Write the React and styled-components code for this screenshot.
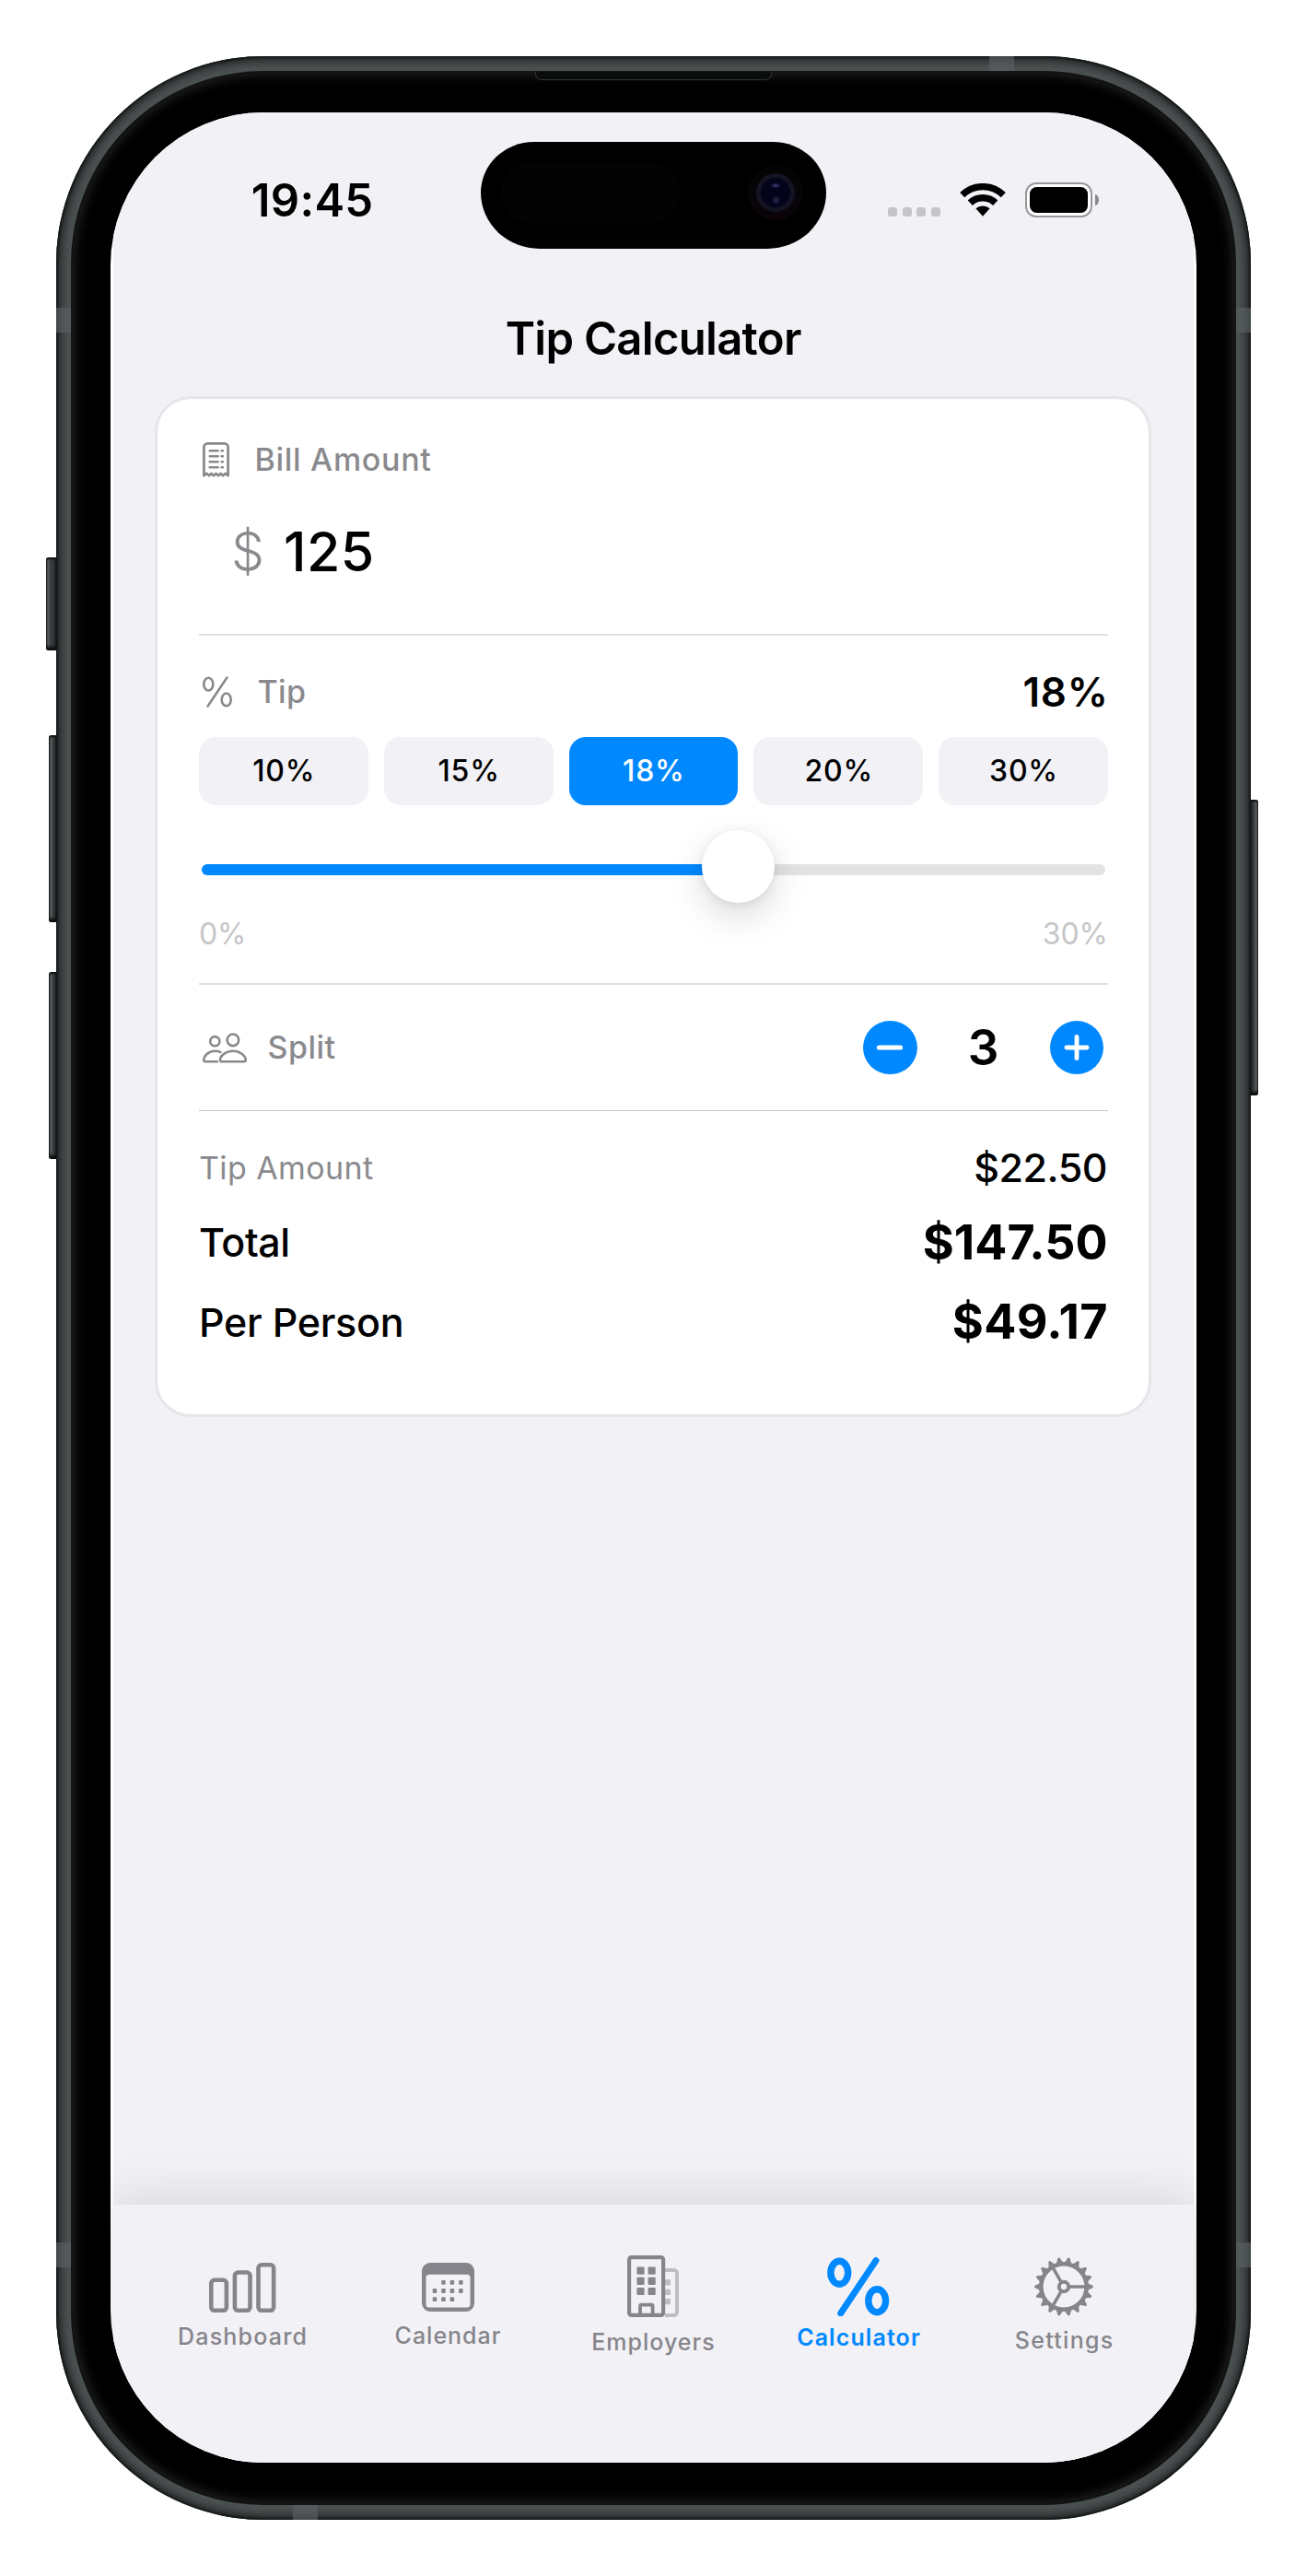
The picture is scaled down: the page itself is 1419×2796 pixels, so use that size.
import React, { useState } from "react";
import styled, { createGlobalStyle, css } from "styled-components";

const BLUE = "#0088ff";
const GRAY = "#8a8a8e";
const TAB_GRAY = "#86858b";
const SURFACE = "#f2f1f6";

const GlobalStyle = createGlobalStyle`
  * { box-sizing: border-box; }
  body {
    margin: 0;
    background: #fff;
    font-family: Inter, "Liberation Sans", sans-serif;
    -webkit-font-smoothing: antialiased;
  }
  button { font-family: inherit; border: 0; padding: 0; cursor: pointer; }
  svg { display: block; flex: none; }
`;

/* ---------- device ---------- */

const Stage = styled.main`
  width: 1419px;
  height: 2796px;
  padding-top: 61px;
  display: flex;
  justify-content: center;
  align-items: flex-start;
  overflow: hidden;
`;

const Device = styled.div`
  position: relative;
  width: 1297px;
  height: 2674px;
  padding: 16px;
  border-radius: 225px;
  background: #4d5253;
  box-shadow: inset 0 0 3px 1px #0a0d0d, inset 0 0 12px 4px #171a1a;
`;

const Bezel = styled.div`
  width: 100%;
  height: 100%;
  padding: 41px;
  border: 2px solid #131515;
  border-radius: 209px;
  background: #000;
  box-shadow: inset 0 0 14px 0 #303030;
`;

const Screen = styled.div`
  width: 1179px;
  height: 2551px;
  margin-top: 2px;
  padding: 0 3px;
  border-radius: 166px;
  background: #fff;
  overflow: hidden;
`;

const Content = styled.div`
  height: 100%;
  display: flex;
  flex-direction: column;
  background: ${SURFACE};
`;

const SideButton = styled.i`
  position: absolute;
  top: ${(p) => p.$top}px;
  ${(p) => (p.$right ? "left: 1297px" : `right: 1297px`)};
  width: ${(p) => p.$width}px;
  height: ${(p) => p.$height}px;
  border-radius: ${(p) => (p.$right ? "0 3px 3px 0" : "3px 0 0 3px")};
  background: linear-gradient(
    ${(p) => (p.$right ? "270deg" : "90deg")},
    #0d1010 0, #5f6566 2px, #3c4142 4px, #343839 70%, #1b1e1e 100%
  );
  box-shadow: inset 0 3px 2px -1px #0d1010, inset 0 -5px 3px -1px #0d1010;
`;

const Antenna = styled.i`
  position: absolute;
  background: rgba(92, 98, 98, 0.6);
  ${(p) =>
    p.$side === "left" || p.$side === "right"
      ? css`
          ${p.$side}: 0;
          top: ${p.$at}px;
          width: 16px;
          height: 27px;
        `
      : css`
          ${p.$side}: 0;
          left: ${p.$at}px;
          width: 27px;
          height: 16px;
        `}
`;

const Earpiece = styled.i`
  position: absolute;
  left: 520px;
  top: 17px;
  width: 257px;
  height: 9px;
  border: 1px solid #303232;
  border-top: 0;
  border-radius: 0 0 7px 7px;
  background: #0b0c0c;
`;

/* ---------- status bar ---------- */

const StatusBar = styled.header`
  display: flex;
  height: 182px;
  padding-top: 32px;
`;

const Clock = styled.div`
  width: 399px;
  height: 126px;
  padding-left: 33px;
  display: flex;
  align-items: center;
  justify-content: center;
`;

const Island = styled.div`
  width: 375px;
  height: 116px;
  padding: 0 25px 6px 22px;
  display: flex;
  align-items: center;
  justify-content: space-between;
  border-radius: 58px 58px 64px 64px / 55px 55px 61px 61px;
  background: #000;
`;

const Sensor = styled.i`
  width: 194px;
  height: 66px;
  border-radius: 33px;
  background: #030303;
`;

const Lens = styled.i`
  width: 60px;
  height: 60px;
  display: grid;
  place-items: center;
  border-radius: 50%;
  background: linear-gradient(#040404, #0a040a);

  &::after {
    content: "";
    width: 32px;
    height: 32px;
    border: 5px solid #131323;
    border-radius: 50%;
    background:
      radial-gradient(ellipse 6px 3px at 50% 26%, #3e3e82, transparent),
      radial-gradient(circle 5px at 52% 76%, #0c3c40, #160630 80%, transparent),
      #03031a;
  }
`;

const StatusIcons = styled.div`
  width: 399px;
  height: 126px;
  padding-left: 67px;
  display: flex;
  align-items: center;
`;

const Signal = styled.div`
  display: flex;
  gap: 5.6px;
  margin: 26px 21px 0 0;

  i {
    width: 10px;
    height: 10px;
    border-radius: 3px;
    background: #c5c4c9;
  }
`;

const Battery = styled.div`
  display: flex;
  align-items: center;
  gap: 3px;
  margin-left: 21px;
`;

const BatteryShell = styled.div`
  width: 73px;
  height: 38px;
  padding: 3px;
  border: 2.5px solid #98989b;
  border-radius: 12px;
  background: #fff;

  &::before {
    content: "";
    display: block;
    height: 100%;
    border-radius: 7.5px;
    background: #000;
  }
`;

const BatteryCap = styled.i`
  width: 4px;
  height: 12px;
  border-radius: 0 4px 4px 0 / 0 6px 6px 0;
  background: #88888b;
`;

/* ---------- text ---------- */

const Text = styled.span`
  font-size: ${(p) => p.$size}px;
  font-weight: ${(p) => p.$weight || 500};
  line-height: 1;
  letter-spacing: ${(p) => p.$track || 0}px;
  margin-right: ${(p) => -(p.$track || 0)}px;
  color: ${(p) => p.$color || "#000"};
  white-space: nowrap;
`;

/* ---------- calculator card ---------- */

const TitleBar = styled.div`
  height: 126px;
  display: flex;
  align-items: center;
  justify-content: center;
`;

const Card = styled.section`
  height: 1108px;
  margin: 0 46px 0 45px;
  padding: 45px 44px 0 45px;
  display: flex;
  flex-direction: column;
  border: 3px solid #e5e5ea;
  border-radius: 39px;
  background: #fff;
`;

const Divider = styled.hr`
  flex: none;
  height: ${(p) => (p.$thin ? 1 : 2)}px;
  margin: 0;
  border: 0;
  background: ${(p) => (p.$thin ? "#c6c6c8" : "#e0e0e1")};
`;

const Row = styled.div`
  flex: none;
  height: ${(p) => p.$height}px;
  padding-top: ${(p) => p.$top || 0}px;
  padding-bottom: ${(p) => p.$bottom || 0}px;
  display: flex;
  align-items: center;
  justify-content: space-between;
`;

const Caption = styled.div`
  display: flex;
  align-items: center;
  gap: ${(p) => p.$gap}px;
  padding-left: 3.5px;
`;

const Amount = styled.div`
  height: 168px;
  padding: 0 0 11px 35px;
  display: flex;
  align-items: center;
  gap: 21px;
`;

const Presets = styled.div`
  display: grid;
  grid-template-columns: repeat(5, 1fr);
  gap: 17px;
`;

const Preset = styled.button`
  height: 74px;
  border-radius: 18px;
  background: ${(p) => (p.$active ? BLUE : SURFACE)};
`;

const Slider = styled.div`
  position: relative;
  height: 80px;
  margin: 27px 3px 0;
  padding-top: 37px;
`;

const Track = styled.div`
  height: 12px;
  border-radius: 6px;
  background: #e3e3e5;
  overflow: hidden;
`;

const Fill = styled.div`
  height: 100%;
  background: ${BLUE};
`;

const Thumb = styled.div`
  position: absolute;
  top: 0;
  width: 79px;
  height: 79px;
  margin-left: 2px;
  border-radius: 50%;
  background: #fff;
  box-shadow: 0 14px 38px rgba(0, 0, 0, 0.15), 0 2px 10px rgba(0, 0, 0, 0.08);
`;

const Stepper = styled.div`
  display: flex;
  align-items: center;
  padding-right: 5px;
`;

const Count = styled.div`
  width: 144px;
  display: flex;
  justify-content: center;
`;

const RoundButton = styled.button`
  width: 58.5px;
  height: 58.5px;
  display: grid;
  place-items: center;
  border-radius: 50%;
  background: ${BLUE};
`;

const Summary = styled.div`
  padding: 23px 0.5px 0 0;
  display: flex;
  flex-direction: column;
`;

/* ---------- tab bar ---------- */

const TabBar = styled.nav`
  height: 280px;
  margin-top: auto;
  padding: 0 29.5px 0 28.5px;
  display: flex;
  background: ${SURFACE};
  box-shadow: 0 -3px 56px rgba(0, 0, 0, 0.13);
`;

const Tab = styled.div`
  flex: 1;
  padding-top: ${(p) => p.$top}px;
  display: flex;
  flex-direction: column;
  align-items: center;
  gap: ${(p) => p.$gap}px;
  color: ${(p) => (p.$active ? BLUE : TAB_GRAY)};
`;

/* ---------- icons ---------- */

const WifiIcon = () => (
  <svg width="50" height="36" viewBox="0 0 50 36">
    <g fill="none" stroke="#000" strokeWidth="7.2">
      <path d="M2.7 12.6A32 32 0 0 1 47.3 12.6" />
      <path d="M11.3 21.2A20 20 0 0 1 38.7 21.2" strokeWidth="7.6" />
    </g>
    <path d="M25 35.8L17.4 27.2A12 12 0 0 1 32.6 27.2z" fill="#000" />
  </svg>
);

const ReceiptIcon = () => (
  <svg width="29" height="38" viewBox="0 0 29 38" fill="none" stroke={GRAY}>
    <path
      d="M1.4 36.2V5.4a4 4 0 0 1 4-4h18.2a4 4 0 0 1 4 4v30.8l-3-2.2-2.6 2.2-2.5-2.2-2.5 2.2-2.5-2.2-2.5 2.2-2.5-2.2-2.5 2.2-2.5-2.2z"
      strokeWidth="2.8"
      strokeLinejoin="round"
    />
    <g strokeWidth="2.5" strokeLinecap="round">
      <path d="M7.7 9.3h9M7.7 15.3h9M7.7 21.3h9M7.7 27.3h9" />
      <path d="M20.6 9.3h1.3M20.6 15.3h1.3M20.6 21.3h1.3M20.6 27.3h1.3" />
    </g>
  </svg>
);

const PercentIcon = () => (
  <svg width="32" height="34" viewBox="0 0 32 34" fill="none" stroke={GRAY} strokeWidth="2.6">
    <ellipse cx="6.3" cy="8.6" rx="5" ry="6.9" />
    <ellipse cx="25.7" cy="25.4" rx="5" ry="6.9" />
    <path d="M26.4 1.6L5.6 32.4" strokeLinecap="round" />
  </svg>
);

const PeopleIcon = () => (
  <svg width="48" height="33" viewBox="0 0 48 33" fill="none" stroke={GRAY} strokeWidth="2.6" strokeLinecap="round">
    <circle cx="32.9" cy="7.8" r="6.3" />
    <circle cx="13.3" cy="9.2" r="5.1" />
    <path d="M20.9 31.3H45c1.2 0 1.8-.7 1.8-1.8 0-4.2-5.9-9.8-13.9-9.8S19 25.3 19 29.5c0 1.1.7 1.8 1.9 1.8z" />
    <path d="M15.8 31.3H3c-1.2 0-1.8-.7-1.8-1.8 0-4.3 5-9.8 12.1-9.8 2.3 0 4.3.5 6 1.2" />
  </svg>
);

const StepIcon = ({ plus }) => (
  <svg width="30" height="30" viewBox="0 0 30 30" stroke="#fff" strokeWidth={plus ? 4.8 : 5.2} strokeLinecap="round">
    {plus ? <path d="M15 3.3V26.7M3.9 15H26.1" /> : <path d="M3.5 15H26.5" />}
  </svg>
);

const BarsIcon = () => (
  <svg width="73" height="54" viewBox="0 0 73 54" fill="none" stroke="currentColor" strokeWidth="4.6">
    <rect x="2.3" y="18.8" width="16.6" height="33" rx="3.5" />
    <rect x="27.9" y="10.5" width="16.6" height="41.3" rx="3.5" />
    <rect x="53.5" y="2.3" width="16.6" height="49.5" rx="3.5" />
  </svg>
);

const CalendarIcon = () => (
  <svg width="57" height="53" viewBox="0 0 57 53">
    <path
      fillRule="evenodd"
      fill="currentColor"
      d="M9 0h39a9 9 0 0 1 9 9v35a9 9 0 0 1-9 9H9a9 9 0 0 1-9-9V9a9 9 0 0 1 9-9zM8 12.8a3.5 3.5 0 0 0-3.5 3.5V45A3.5 3.5 0 0 0 8 48.5h41a3.5 3.5 0 0 0 3.5-3.5V16.3a3.5 3.5 0 0 0-3.5-3.5z"
    />
    <g fill="currentColor">
      {[[1, 0], [2, 0], [3, 0], [0, 1], [1, 1], [2, 1], [3, 1], [0, 2], [1, 2], [2, 2]].map(([c, r]) => (
        <rect key={`${c}${r}`} x={11.7 + c * 9.45} y={18.9 + r * 9.2} width="4.6" height="4.8" rx="1.2" />
      ))}
    </g>
  </svg>
);

const BuildingIcon = () => (
  <svg width="56" height="67" viewBox="0 0 56 67">
    <g fill="#bebdc2">
      <path d="M41 14h9.5a5.5 5.5 0 0 1 5.5 5.5v42a5.5 5.5 0 0 1-5.5 5.5H41v-4h9.5a1.5 1.5 0 0 0 1.5-1.5v-42a1.5 1.5 0 0 0-1.5-1.5H41z" />
      <rect x="40" y="26.2" width="7" height="6.2" rx="1" />
      <rect x="40" y="36.8" width="7" height="6.2" rx="1" />
      <rect x="40" y="47" width="7" height="6.2" rx="1" />
    </g>
    <rect x="2.1" y="2.1" width="37" height="62.8" rx="2.5" fill={SURFACE} stroke="currentColor" strokeWidth="4.2" />
    <path d="M14 64V55.2a1.5 1.5 0 0 1 1.5-1.5h10.6a1.5 1.5 0 0 1 1.5 1.5V64" fill="none" stroke="currentColor" strokeWidth="3.8" />
    <g fill="currentColor">
      {[0, 1, 2].map((r) =>
        [10.4, 22.5].map((x) => (
          <rect key={`${r}${x}`} x={x} y={12.5 + r * 11.2} width="8.2" height="8.2" rx="1" />
        ))
      )}
    </g>
  </svg>
);

const BigPercentIcon = () => (
  <svg width="68" height="64" viewBox="0 0 68 64" fill="none" stroke="currentColor">
    <ellipse cx="13.3" cy="16.8" rx="9.4" ry="12.5" strokeWidth="7.4" />
    <ellipse cx="54.2" cy="47.2" rx="9.4" ry="12.5" strokeWidth="7.4" />
    <path d="M53 3.6L14.8 60.8" strokeWidth="7" strokeLinecap="round" />
  </svg>
);

const GearIcon = () => (
  <svg width="64" height="64" viewBox="-32 -32 64 64" fill="none" stroke="currentColor">
    <circle r="24.7" strokeWidth="4.6" />
    <circle r="5.2" strokeWidth="4" />
    <path d="M6.5 0H24M-3.25 -5.6L-12 -20.8M-3.25 5.6L-12 20.8" strokeWidth="3.5" />
    <g fill="currentColor" stroke="none">
      {Array.from({ length: 18 }, (_, i) => (
        <path key={i} d="M25.5 -4L30.2 -1.7Q31.9 -1.5 31.9 0T30.2 1.7L25.5 4z" transform={`rotate(${i * 20})`} />
      ))}
    </g>
  </svg>
);

/* ---------- app ---------- */

const PRESETS = [10, 15, 18, 20, 30];
const MAX_TIP = 30;

const TABS = [
  { label: "Dashboard", icon: <BarsIcon />, top: 63, gap: 14, track: 1.2 },
  { label: "Calendar", icon: <CalendarIcon />, top: 63, gap: 13.5, track: 1 },
  { label: "Employers", icon: <BuildingIcon />, top: 55, gap: 14.5, track: 1 },
  { label: "Calculator", icon: <BigPercentIcon />, top: 57, gap: 11, track: 1.1, active: true },
  { label: "Settings", icon: <GearIcon />, top: 57, gap: 14, track: 1.3 },
];

const money = (n) => `$${n.toFixed(2)}`;

export default function App() {
  const [tip, setTip] = useState(18);
  const [people, setPeople] = useState(3);
  const bill = 125;
  const tipAmount = (bill * tip) / 100;
  const total = bill + tipAmount;
  const ratio = tip / MAX_TIP;

  return (
    <>
      <GlobalStyle />
      <Stage>
        <Device>
          <SideButton $top={544} $width={11} $height={101} />
          <SideButton $top={737} $width={8} $height={203} />
          <SideButton $top={994} $width={8} $height={203} />
          <SideButton $right $top={807} $width={8} $height={321} />
          <Bezel>
            <Screen>
              <Content>
                <StatusBar>
                  <Clock>
                    <Text $size={49} $weight={600} $track={0.3}>19:45</Text>
                  </Clock>
                  <Island>
                    <Sensor />
                    <Lens />
                  </Island>
                  <StatusIcons>
                    <Signal><i /><i /><i /><i /></Signal>
                    <WifiIcon />
                    <Battery>
                      <BatteryShell />
                      <BatteryCap />
                    </Battery>
                  </StatusIcons>
                </StatusBar>

                <TitleBar>
                  <Text $size={49} $weight={600} $track={-0.7}>Tip Calculator</Text>
                </TitleBar>

                <Card>
                  <Row $height={42}>
                    <Caption $gap={28}>
                      <ReceiptIcon />
                      <Text $size={34} $track={0.7} $color={GRAY}>Bill Amount</Text>
                    </Caption>
                  </Row>
                  <Amount>
                    <Text $size={57} $weight={300} $color={GRAY}>$</Text>
                    <Text $size={59} $weight={550} $track={0.4}>{bill}</Text>
                  </Amount>
                  <Divider />

                  <Row $height={110} $top={12}>
                    <Caption $gap={28}>
                      <PercentIcon />
                      <Text $size={34} $track={0.35} $color={GRAY}>Tip</Text>
                    </Caption>
                    <Text $size={44} $weight={600} $track={0.8}>{tip}%</Text>
                  </Row>
                  <Presets>
                    {PRESETS.map((p) => (
                      <Preset key={p} $active={p === tip} onClick={() => setTip(p)}>
                        <Text $size={32} $track={0.8} $color={p === tip ? "#fff" : "#000"}>{p}%</Text>
                      </Preset>
                    ))}
                  </Presets>
                  <Slider>
                    <Track>
                      <Fill style={{ width: `${ratio * 100}%` }} />
                    </Track>
                    <Thumb style={{ left: `calc(${ratio} * (100% - 79px))` }} />
                  </Slider>
                  <Row $height={86} $bottom={21}>
                    <Text $size={32} $weight={400} $track={-0.3} $color="#c5c5c7">0%</Text>
                    <Text $size={32} $weight={400} $color="#c5c5c7">30%</Text>
                  </Row>
                  <Divider />

                  <Row $height={136}>
                    <Caption $gap={23}>
                      <PeopleIcon />
                      <Text $size={34} $track={0.5} $color={GRAY}>Split</Text>
                    </Caption>
                    <Stepper>
                      <RoundButton aria-label="Fewer people" onClick={() => setPeople(Math.max(1, people - 1))}>
                        <StepIcon />
                      </RoundButton>
                      <Count>
                        <Text $size={53} $weight={600}>{people}</Text>
                      </Count>
                      <RoundButton aria-label="More people" onClick={() => setPeople(people + 1)}>
                        <StepIcon plus />
                      </RoundButton>
                    </Stepper>
                  </Row>
                  <Divider $thin />

                  <Summary>
                    <Row $height={77}>
                      <Text $size={34} $weight={400} $track={0.4} $color={GRAY}>Tip Amount</Text>
                      <Text $size={43} $track={-0.5}>{money(tipAmount)}</Text>
                    </Row>
                    <Row $height={85}>
                      <Text $size={43} $track={-0.4}>Total</Text>
                      <Text $size={52} $weight={700}>{money(total)}</Text>
                    </Row>
                    <Row $height={88}>
                      <Text $size={43} $track={-0.25}>Per Person</Text>
                      <Text $size={52} $weight={700} $track={0.4}>{money(total / people)}</Text>
                    </Row>
                  </Summary>
                </Card>

                <TabBar>
                  {TABS.map((t) => (
                    <Tab key={t.label} $active={t.active} $top={t.top} $gap={t.gap}>
                      {t.icon}
                      <Text $size={25} $weight={t.active ? 600 : 500} $track={t.track} $color="inherit">
                        {t.label}
                      </Text>
                    </Tab>
                  ))}
                </TabBar>
              </Content>
            </Screen>
          </Bezel>
          <Earpiece />
          <Antenna $side="left" $at={273} />
          <Antenna $side="right" $at={273} />
          <Antenna $side="left" $at={2373} />
          <Antenna $side="right" $at={2373} />
          <Antenna $side="top" $at={1013} />
          <Antenna $side="bottom" $at={257} />
        </Device>
      </Stage>
    </>
  );
}
